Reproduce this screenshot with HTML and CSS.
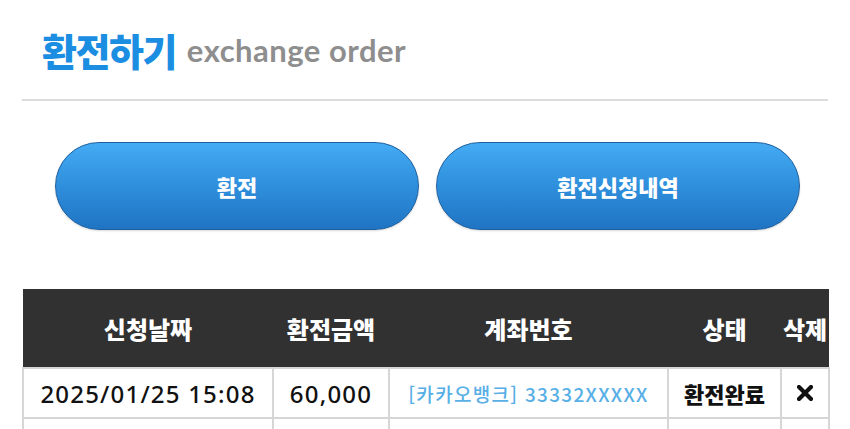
FILE: index.html
```html
<!DOCTYPE html>
<html lang="ko">
<head>
<meta charset="utf-8">
<link rel="stylesheet" href="styles.css">
</head>
<body>
<div class="page">
  <header class="title">
    <h1 class="title-ko">환전하기</h1>
    <span class="title-en">exchange order</span>
  </header>
  <div class="actions">
    <button class="btn">환전</button>
    <button class="btn">환전신청내역</button>
  </div>
  <table class="orders">
    <colgroup>
      <col class="c-date"><col class="c-amt"><col class="c-acct"><col class="c-state"><col class="c-del">
    </colgroup>
    <thead>
      <tr><th>신청날짜</th><th>환전금액</th><th>계좌번호</th><th>상태</th><th>삭제</th></tr>
    </thead>
    <tbody>
      <tr>
        <td class="num">2025/01/25 15:08</td>
        <td class="num">60,000</td>
        <td class="acct">[카카오뱅크] 33332XXXXX</td>
        <td class="state">환전완료</td>
        <td class="del"><svg width="16" height="16" viewBox="0 0 16 16"><path d="M2 2 L14 14 M14 2 L2 14" stroke="#111" stroke-width="4.2" stroke-linecap="round"/></svg></td>
      </tr>
      <tr>
        <td></td><td></td><td></td><td></td><td></td>
      </tr>
    </tbody>
  </table>
</div>
</body>
</html>
```
FILE: styles.css
```css
html, body {
  margin: 0;
  background: #fff;
  font-family: "Noto Sans CJK KR", "Noto Sans", sans-serif;
  overflow: hidden;
}
.page {
  padding: 0 22px;
}
.title {
  display: flex;
  align-items: center;
  padding-left: 20px;
  border-bottom: 2px solid #dcdcdc;
  box-sizing: border-box;
  height: 101px;
}
.title-ko {
  margin: 0;
  font-size: 38px;
  font-weight: 900;
  color: #1b8ee2;
  letter-spacing: -1.5px;
  line-height: 1;
}
.title-en {
  margin-left: 11px;
  font-family: Lato, sans-serif;
  font-weight: 700;
  font-size: 31px;
  letter-spacing: 0.5px;
  color: #8e8e8e;
  line-height: 1;
  position: relative;
  top: 1px;
}
.actions {
  display: flex;
  gap: 17px;
  padding-left: 33px;
  margin-top: 41px;
}
.btn {
  width: 364px;
  height: 88px;
  border-radius: 44px;
  border: 1px solid #1d5f9e;
  background: linear-gradient(to bottom, #44abf3 0%, #2f8fdc 50%, #1f74c3 100%);
  color: #fff;
  font-family: "Noto Sans CJK KR", sans-serif;
  font-size: 22px;
  font-weight: 900;
  letter-spacing: 0;
  box-shadow: 0 1px 2px rgba(0,0,0,0.15);
}
.orders {
  margin-top: 59px;
  width: 806px;
  border-collapse: collapse;
  table-layout: fixed;
}
.c-date { width: 250px; }
.c-amt { width: 116px; }
.c-acct { width: 279px; }
.c-state { width: 113px; }
.c-del { width: 48px; }
.orders th {
  background: #313131;
  color: #fff;
  height: 78px;
  padding: 0;
  font-size: 24px;
  font-weight: 900;
  letter-spacing: 0;
  text-align: center;
}
.orders td {
  border: 2px solid #d6d6d6;
  height: 48px;
  padding: 0;
  text-align: center;
  color: #111;
}
.orders td.num {
  font-family: "Noto Sans", sans-serif;
  font-weight: 500;
  font-size: 24px;
  letter-spacing: 1.2px;
}
.orders td.acct {
  color: #58afe6;
  font-size: 19px;
  font-weight: 500;
  letter-spacing: 1.3px;
}
.orders td.state {
  font-size: 22px;
  font-weight: 900;
  letter-spacing: 0;
}
.orders td.del svg {
  display: block;
  margin: 0 auto;
}
```
